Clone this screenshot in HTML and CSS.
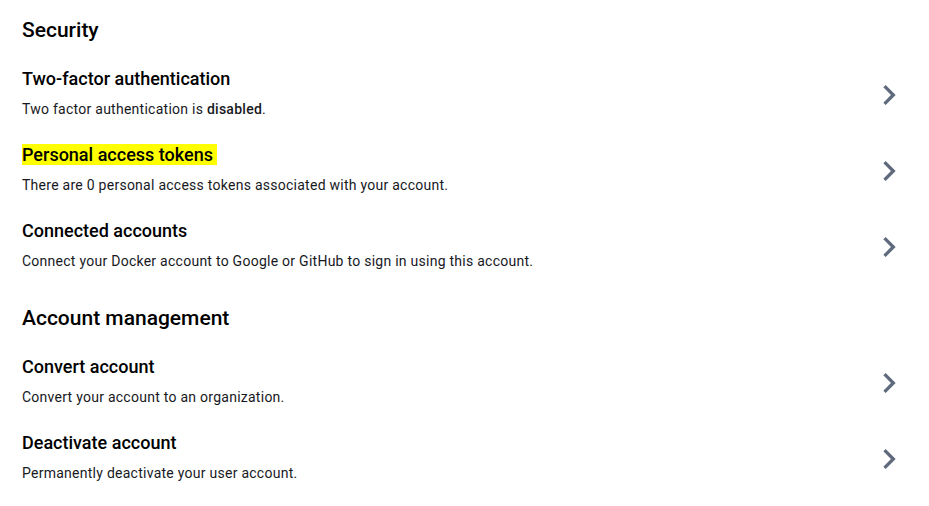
FILE: index.html
```html
<!DOCTYPE html>
<html>
<head>
<meta charset="utf-8">
<link rel="stylesheet" href="styles.css">
</head>
<body>
<main class="page">
  <section class="section">
    <h2 class="section-title">Security</h2>
    <div class="row">
      <div class="row-text">
        <div class="row-title">Two-factor authentication</div>
        <div class="row-desc">Two factor authentication is <strong>disabled</strong>.</div>
      </div>
      <svg class="chev" viewBox="0 0 24 24" width="40" height="40"><path d="M10 6 8.59 7.41 13.17 12l-4.58 4.59L10 18l6-6z"/></svg>
    </div>
    <div class="row">
      <div class="row-text">
        <div class="row-title"><mark class="hl">Personal access tokens</mark></div>
        <div class="row-desc">There are 0 personal access tokens associated with your account.</div>
      </div>
      <svg class="chev" viewBox="0 0 24 24" width="40" height="40"><path d="M10 6 8.59 7.41 13.17 12l-4.58 4.59L10 18l6-6z"/></svg>
    </div>
    <div class="row">
      <div class="row-text">
        <div class="row-title">Connected accounts</div>
        <div class="row-desc">Connect your Docker account to Google or GitHub to sign in using this account.</div>
      </div>
      <svg class="chev" viewBox="0 0 24 24" width="40" height="40"><path d="M10 6 8.59 7.41 13.17 12l-4.58 4.59L10 18l6-6z"/></svg>
    </div>
  </section>
  <section class="section">
    <h2 class="section-title">Account management</h2>
    <div class="row">
      <div class="row-text">
        <div class="row-title">Convert account</div>
        <div class="row-desc">Convert your account to an organization.</div>
      </div>
      <svg class="chev" viewBox="0 0 24 24" width="40" height="40"><path d="M10 6 8.59 7.41 13.17 12l-4.58 4.59L10 18l6-6z"/></svg>
    </div>
    <div class="row">
      <div class="row-text">
        <div class="row-title">Deactivate account</div>
        <div class="row-desc">Permanently deactivate your user account.</div>
      </div>
      <svg class="chev" viewBox="0 0 24 24" width="40" height="40"><path d="M10 6 8.59 7.41 13.17 12l-4.58 4.59L10 18l6-6z"/></svg>
    </div>
  </section>
</main>
</body>
</html>
```
FILE: styles.css
```css
* { box-sizing: border-box; }
html, body { margin: 0; padding: 0; background: #fff; }
body {
  font-family: Roboto, "Liberation Sans", sans-serif;
  color: #17191e;
}
.page {
  padding: 15px 20px 0 22px;
}
.section + .section { margin-top: 20px; }
.section-title {
  margin: 0 0 10px;
  font-size: 21px;
  font-weight: 500;
  line-height: 30px;
  color: #000;
}
.row {
  display: flex;
  align-items: center;
  justify-content: space-between;
  padding: 12px 0 12px;
}
.row-text {
  display: flex;
  flex-direction: column;
  gap: 8px;
}
.row-title {
  font-size: 18px;
  font-weight: 500;
  line-height: 24px;
  color: #000;
}
.row-desc {
  font-size: 14px;
  letter-spacing: 0.26px;
  line-height: 20px;
  color: #17191e;
}
.row-desc strong { font-weight: 500; }
.hl {
  background: #ffff00;
  color: inherit;
  padding: 0 4px 0 0;
}
.chev {
  fill: #5f6b7c;
  flex: none;
  margin-top: 3px;
}
```
